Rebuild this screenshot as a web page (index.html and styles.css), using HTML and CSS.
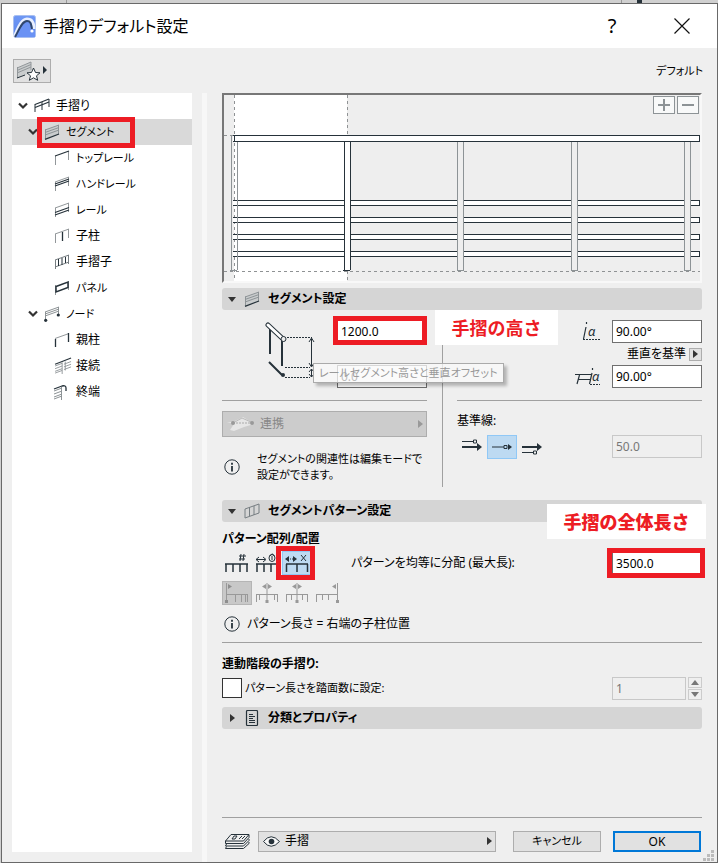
FILE: index.html
```html
<!DOCTYPE html>
<html lang="ja">
<head>
<meta charset="utf-8">
<meta name="viewport" content="width=device-width, initial-scale=1">
<title>手摺りデフォルト設定</title>
<link rel="stylesheet" href="styles.css">
</head>
<body>
<svg width="0" height="0" class="defs" aria-hidden="true">
  <symbol id="segment" viewBox="0 0 16 16"><path d="M1 6 15 1v9L1 15z" fill="#c9cccd"/><path d="M1 6 15 1M1 8.500 15 3.500M1 11 15 6M1.500 5.500v9.500M14.500 1v9" stroke="#8d9396" fill="none"/><path d="M1 15.300 15 10" stroke="#26323a" stroke-width="1.300"/></symbol>
  <symbol id="chevron" viewBox="0 0 10 8"><path d="M1 1.500 5 5.500 9 1.500" fill="none" stroke="#333" stroke-width="2.200"/></symbol>
  <symbol id="info" viewBox="0 0 16 16"><circle cx="8" cy="8" r="7.200" fill="none" stroke="#26323a"/><path d="M8 3.700v2M8 7v5.500" stroke="#26323a" stroke-width="1.800"/></symbol>
  <symbol id="down" viewBox="0 0 8 5"><path d="M0 0h8L4 5z" fill="#333"/></symbol>
  <symbol id="right" viewBox="0 0 5 8"><path d="M0 0v8l5-4z" fill="currentColor"/></symbol>
</svg>
<div class="backdrop" aria-hidden="true"></div>
<main class="dialog">
  <header class="titlebar">
    <svg class="logo" width="23" height="23" viewBox="0 0 23 23"><defs><linearGradient id="blue" x2="0" y2="1"><stop stop-color="#6f98f4"/><stop offset="1" stop-color="#5c86ee"/></linearGradient></defs><rect x=".5" y=".5" width="22" height="22" rx="2" fill="url(#blue)" stroke="#a8bff0"/><path d="M1 22C5 14 7 5 14 4c6 0 7 6 7 10" fill="none" stroke="#e8efff" stroke-width="3"/><path d="M3 22C7 15 9 7 14 7c3 0 4 3 5 7v2l3-1v7z" fill="#6a92f4"/><path d="M2 22C6 15 9 6 14 6c4 0 4 3 5 8" fill="none" stroke="#30476f" stroke-width="2"/><circle cx="19" cy="16" r="1.600" fill="#fff"/></svg>
    <h1>手摺りデフォルト設定</h1>
    <button class="window-button help" type="button" aria-label="ヘルプ">?</button>
    <button class="window-button" type="button" aria-label="閉じる"><svg width="16" height="16" viewBox="0 0 16 16"><path d="m.5.5 15 15m0-15-15 15" stroke="#111" stroke-width="1.200"/></svg></button>
  </header>
  <div class="toolbar">
    <button class="favorites" type="button" aria-label="お気に入り"><svg width="32" height="20" viewBox="0 0 32 20"><path d="M1 7 15 1v11L1 17z" fill="#c9cccd"/><path d="M1 7 15 1M1 9.500 15 3.500M1 12 15 6M1.500 6v11M15 1v8" stroke="#92979a" fill="none"/><path d="m1 17 8-3" stroke="#26323a"/><path d="m17.500 7 2 4.500 4.500.3-3.500 3 1.200 4.500-4.200-2.500-4.200 2.500 1.200-4.500-3.500-3 4.500-.3z" fill="#fff" stroke="#26323a"/><path d="M27 5v8l4-4z" fill="#26323a"/></svg></button>
    <span class="kana">デフォルト</span>
  </div>
  <div class="workspace">
    <nav class="tree" aria-label="設定">
      <ul>
        <li class="node top"><svg class="chevron"><use href="#chevron"/></svg><svg class="tree-icon" viewBox="0 0 16 16"><path d="M1 6.500 15 1M1 9.500 15 4" stroke="#26323a" stroke-width="1.300"/><path d="M1 6v8M8 4v8M15 1v8" stroke="#26323a"/></svg>手摺り</li>
        <li class="node middle selected kana"><svg class="chevron"><use href="#chevron"/></svg><svg class="tree-icon"><use href="#segment"/></svg>セグメント<span class="marker tree-marker"></span></li>
        <li class="node leaf kana"><svg class="tree-icon" viewBox="0 0 16 16"><path d="M1.500 6v9M14.500 1v9" stroke="#92979a"/><path d="M1 6 15 1" stroke="#26323a" stroke-width="1.300"/></svg>トップレール</li>
        <li class="node leaf kana"><svg class="tree-icon" viewBox="0 0 16 16"><path d="M1.500 6v9M14.500 1v9M1 6 15 1" stroke="#92979a"/><path d="m1 8 14-5M1 10l14-5" stroke="#26323a" stroke-width="1.200"/></svg>ハンドレール</li>
        <li class="node leaf kana"><svg class="tree-icon" viewBox="0 0 16 16"><path d="M1.500 6v9M14.500 1v9M1 6 15 1" stroke="#92979a"/><path d="m1 10.500 14-5M1 13l14-5" stroke="#26323a" stroke-width="1.200"/></svg>レール</li>
        <li class="node leaf"><svg class="tree-icon" viewBox="0 0 16 16"><path d="M1.500 6v9M14.500 1v9M1 6 15 1" stroke="#92979a"/><path d="M8.500 4v9" stroke="#26323a" stroke-width="1.300"/></svg>子柱</li>
        <li class="node leaf"><svg class="tree-icon" viewBox="0 0 16 16"><path d="M1.500 6v9M14.500 1v9M1 6 15 1M1 13 15 8" stroke="#777e82"/><path d="M4.500 5v7M8 4v7M11.500 3v6" stroke="#26323a"/></svg>手摺子</li>
        <li class="node leaf kana"><svg class="tree-icon" viewBox="0 0 16 16"><path d="M1.500 5v10M14.500 1v9" stroke="#92979a"/><path d="M2 6.500 14 2v5.500L2 12z" fill="none" stroke="#26323a" stroke-width="1.500"/></svg>パネル</li>
        <li class="node middle kana"><svg class="chevron"><use href="#chevron"/></svg><svg class="tree-icon" viewBox="0 0 16 16"><path d="M1.500 6v8M14.500 1v8M1 6 15 1M1 8 15 3M1 10 15 5" stroke="#8d9396"/><circle cx="1.700" cy="14.300" r="1.600" fill="#26323a"/><circle cx="14.300" cy="9" r="1.600" fill="#26323a"/></svg>ノード</li>
        <li class="node leaf"><svg class="tree-icon" viewBox="0 0 16 16"><path d="M1 6.500 15 1.500" stroke="#92979a"/><path d="M1.500 7v8M14.500 1v9" stroke="#26323a" stroke-width="1.300"/></svg>親柱</li>
        <li class="node leaf"><svg class="tree-icon wide" viewBox="0 0 19 18"><path d="M0 9 8 6M0 12l8-3M0 15l8-3M0 17l8-3M10 7l8-3M10 10l8-3M10 13l8-3M8 5v13M11.500 4v10" stroke="#8d9396"/><path d="M0 7 18 0" stroke="#26323a" stroke-width="1.300"/></svg>接続</li>
        <li class="node leaf"><svg class="tree-icon" viewBox="0 0 16 16"><path d="m0 7 8-3M0 10l8-3M0 13l8-3M0 15l8-3M7.500 3v13" stroke="#8d9396"/><path d="m0 5 8-3q4-1 4 2v3" fill="none" stroke="#26323a" stroke-width="1.300"/></svg>終端</li>
      </ul>
    </nav>
    <div class="splitter"></div>
    <form class="settings">
      <div class="preview">
        <svg class="drawing" viewBox="224 95 476 186" preserveAspectRatio="xMinYMin slice" shape-rendering="crispEdges">
          <path d="M234 95h113v186H234z" fill="#fff"/>
          <path d="M234.500 95v186M347.500 95v40M347.500 271v10M224 135.500h10M224 271.500h476" stroke="#8f9294" stroke-dasharray="3 3"/>
          <g fill="#fff" stroke="#26323a"><path d="M233 135.500h466.500v6H233"/><path d="M233 200.500h466.500v5H233"/><path d="M233 217.500h466.500v5H233"/><path d="M233 234.500h466.500v5H233"/><path d="M233 251.500h466.500v5H233"/><path d="M344.500 142v128M350.500 142v128M343 270.500h7"/></g>
          <path d="M345 142h5v128h-5z" fill="#fff"/>
          <g fill="#eee" stroke="#8d9396"><path d="M457.500 142v128.500h6V142"/><path d="M571.500 142v128.500h6V142"/><path d="M684.500 142v128.500h6V142"/></g>
          <path d="M231.500 136v134M237.500 142v128M230 270.500h7" stroke="#8d9396"/><path d="M234.500 135v7" stroke="#26323a"/>
        </svg>
        <div class="zoom-buttons"><button type="button" aria-label="拡大"><svg width="12" height="12"><path d="M0 6h12M6 0v12" stroke="#8d9396" stroke-width="2"/></svg></button><button type="button" aria-label="縮小"><svg width="12" height="12"><path d="M0 6h12" stroke="#8d9396" stroke-width="2"/></svg></button></div>
      </div>
      <h2 class="section-title"><svg class="down"><use href="#down"/></svg><svg class="section-icon"><use href="#segment"/></svg>セグメント設定</h2>
      <div class="segment-section">
        <div class="column">
          <div class="dimensions">
            <svg class="rail-figure" width="50" height="60" viewBox="0 0 50 60"><path d="M5 6v28M17 20v26M4 42l13 13" stroke="#26323a" stroke-width="2"/><path d="m3 5 15 14" stroke="#26323a" stroke-width="5" stroke-linecap="round"/><path d="m3 5 15 14" stroke="#fff" stroke-width="3" stroke-linecap="round"/><circle cx="18.500" cy="19" r="2.500" fill="#eee" stroke="#26323a"/><circle cx="18" cy="55" r="2" fill="#26323a"/><path d="M22 17.500h25M20 47.500h25M20 57.500h25" stroke="#26323a" stroke-dasharray="2 1"/><path d="M46.500 19v27M46.500 49v8M44 22l2.500-4 2.500 4M44 43l2.500 4 2.500-4M44 52l2.500-3 2.500 3M44 54l2.500 3 2.500-3" fill="none" stroke="#26323a"/></svg>
            <div class="dimension-fields">
              <div class="field-anchor"><input aria-label="レールセグメント高さ" value="1200.0"><span class="marker field-marker"></span><strong class="callout height-callout">手摺の高さ</strong></div>
              <div class="field-anchor"><input aria-label="垂直オフセット" value="0.0"><span class="tooltip kana" role="tooltip">レールセグメント高さと垂直オフセット</span></div>
            </div>
          </div>
          <div class="below-rule">
            <button class="link-button" type="button" disabled><svg width="28" height="16" viewBox="0 0 28 16"><path d="M0 6h6l10-5 11 7-10 3-10 4-4-1 4-6z" fill="#e6e6e6"/><path d="M6 7 15 2l11 5" fill="none" stroke="#bbb"/><path d="M6 7h20" stroke="#aaa" stroke-dasharray="2 1"/><circle cx="6" cy="7" r="2" fill="#999"/><circle cx="25" cy="7" r="2" fill="#999"/></svg><span>連携</span><svg class="right"><use href="#right"/></svg></button>
            <p class="information kana"><svg class="info"><use href="#info"/></svg><span>セグメントの関連性は編集モードで<br>設定ができます。</span></p>
          </div>
        </div>
        <div class="column">
          <div class="angles">
            <label class="angle"><svg width="24" height="20" viewBox="0 0 24 20"><path d="M4 5 1.500 17M4.500 0v2" stroke="#26323a" stroke-width="1.200"/><path d="M1 17.500h18" stroke="#26323a" stroke-dasharray="2 1"/><text x="6" y="14" class="alpha">α</text></svg><input aria-label="上部角度" value="90.00°"></label>
            <div class="reference"><span>垂直を基準</span><button type="button" aria-label="角度の基準"><svg class="right"><use href="#right"/></svg></button></div>
            <label class="angle"><svg width="31" height="20" viewBox="0 0 31 20"><path d="M0 7.500h17M3 12.500h13M4.500 8 2 17M17 6l-2.500 11M17.500 1v2" stroke="#26323a" stroke-width="1.200"/><path d="M15 17.500h10" stroke="#26323a" stroke-dasharray="2 1"/><text x="17" y="14" class="alpha">α</text></svg><input aria-label="下部角度" value="90.00°"></label>
          </div>
          <div class="below-rule">
            <span class="baseline-label">基準線:</span>
            <div class="baseline">
              <button class="tool" type="button" aria-label="左側の基準線"><svg width="20" height="16" viewBox="0 0 20 16"><path d="M0 2.500h11M11.500 1h3v3h-3z" stroke="#26323a" fill="none"/><path d="M0 8h16" stroke="#26323a" stroke-width="2"/><path d="M15 4v8l5-4z" fill="#26323a"/></svg></button>
              <button class="tool active" type="button" aria-label="中央の基準線"><svg width="20" height="16" viewBox="0 0 20 16"><path d="M0 8h12M12 6.500h3v3h-3z" stroke="#26323a" fill="none"/><path d="M16 5v6l4-3z" fill="#26323a"/></svg></button>
              <button class="tool" type="button" aria-label="右側の基準線"><svg width="20" height="16" viewBox="0 0 20 16"><path d="M0 13.500h11M11.500 12h3v3h-3z" stroke="#26323a" fill="none"/><path d="M0 8h16" stroke="#26323a" stroke-width="2"/><path d="M15 4v8l5-4z" fill="#26323a"/></svg></button>
              <input aria-label="オフセット" value="50.0" disabled>
            </div>
          </div>
        </div>
      </div>
      <h2 class="section-title"><svg class="down"><use href="#down"/></svg><svg class="section-icon" viewBox="0 0 16 16"><path d="M1 6 15 1v9L1 15zM5.500 4v9M10 3v9" fill="none" stroke="#777e82"/></svg>セグメントパターン設定<strong class="callout length-callout">手摺の全体長さ</strong></h2>
      <div class="pattern-section">
        <h3>パターン配列/配置</h3>
        <div class="pattern-row">
          <div class="tools">
            <button class="tool" type="button" aria-label="個数"><svg width="24" height="20" viewBox="0 0 24 20"><path d="M0 11h23M1 11v8M8 11v8M15 11v8M22 11v8" stroke="#26323a" stroke-width="1.500"/><path d="m16 1-1 7m4-7-1 7m-4-5h7m-7 3h6" stroke="#26323a"/></svg></button>
            <button class="tool" type="button" aria-label="固定長"><svg width="24" height="20" viewBox="0 0 24 20"><path d="M1 11h22M2 11v8M9 11v8M16 11v8" stroke="#26323a" stroke-width="1.500"/><path d="M1 6.500h9M4 4 1 6.500 4 9M8 4l3 2.500L8 9M15 3q2.500-4 4 0" stroke="#26323a" fill="none"/><ellipse cx="17" cy="5" rx="3" ry="3.500" fill="none" stroke="#26323a"/><path d="M17 3v4" stroke="#26323a"/></svg></button>
            <button class="tool active" type="button" aria-label="均等分配"><svg width="24" height="20" viewBox="0 0 24 20"><path d="M1 11h22M1.500 11v8M12 11v8M22.500 11v8" stroke="#26323a" stroke-width="1.500"/><path d="M0 6l4-3v6zM12 6 8 3v6z" fill="#26323a"/><path d="M5 6h1M7 6h1M16 2l5 6m0-6-5 6" stroke="#26323a"/></svg></button>
            <span class="marker tool-marker"></span>
          </div>
          <label for="length">パターンを均等に分配 (最大長):</label>
          <div class="field-anchor end"><input id="length" class="focused" value="3500.0"><span class="marker length-marker"></span></div>
        </div>
        <div class="tools alignments">
          <button class="tool active" type="button" disabled aria-label="始点"><svg width="24" height="20" viewBox="0 0 24 20"><path d="M1.500 0v18M1 11.500h22M10.500 12v7M16.500 12v7M20.500 12v7M22.500 11v8" stroke="#999"/><path d="M3 1v5l4-2.500zM0 17h3v3H0z" fill="#8e8e8e"/></svg></button>
          <button class="tool" type="button" disabled aria-label="中央間隔"><svg width="24" height="20" viewBox="0 0 24 20"><path d="M12 0v17M1 11.500h22M1.500 11v8M4.500 11v6M19.500 11v6M22.500 11v8" stroke="#999"/><path d="M11 1v5L7 3.500zM13 1v5l4-2.500zM10.500 17h3v3h-3z" fill="#999"/></svg></button>
          <button class="tool" type="button" disabled aria-label="中央支柱"><svg width="24" height="20" viewBox="0 0 24 20"><path d="M12 0v17M1 11.500h22M1.500 11v8M6.500 11v6M17.500 11v6M22.500 11v8" stroke="#999"/><path d="M11 1v5L7 3.500zM13 1v5l4-2.500zM10.500 17h3v3h-3z" fill="#999"/></svg></button>
          <button class="tool" type="button" disabled aria-label="終点"><svg width="24" height="20" viewBox="0 0 24 20"><path d="M22.500 0v18M1 11.500h22M1.500 11v8M7.500 11v6M13.500 11v6" stroke="#999"/><path d="M21 1v5l-4-2.500zM21 17h3v3h-3z" fill="#999"/></svg></button>
        </div>
        <p class="information pattern-info"><svg class="info"><use href="#info"/></svg><span>パターン長さ = 右端の子柱位置</span></p>
      </div>
      <div class="stair-section">
        <h3>連動階段の手摺り:</h3>
        <div class="stair-row"><input type="checkbox" id="steps"><label class="kana" for="steps">パターン長さを踏面数に設定:</label><div class="stepper"><input aria-label="踏面数" value="1" disabled><div class="spin"><button type="button" disabled aria-label="増加"><svg width="8" height="5"><path d="m0 5 4-5 4 5z" fill="#777"/></svg></button><button type="button" disabled aria-label="減少"><svg width="8" height="5"><path d="m0 0 4 5 4-5z" fill="#777"/></svg></button></div></div></div>
      </div>
      <h2 class="section-title"><svg class="right"><use href="#right"/></svg><svg class="section-icon" viewBox="0 0 16 16"><rect x="2.500" y=".5" width="11" height="15" rx="1" fill="none" stroke="#26323a" stroke-width="1.200"/><path d="M5 4.500h4M5 6.500h6M5 8.500h4M5 10.500h6M5 12.500h6" stroke="#26323a"/></svg>分類とプロパティ</h2>
      <footer class="footer">
        <svg class="layers" width="26" height="16" viewBox="0 0 26 16"><path d="M7 1.500h18L19.500 8h-18zM1.500 8v2.500h18L25 4.500V2M2.500 11l-1 2h18L25 7.500V6M2.500 13.500l-1 2h18l5.500-5V9" fill="none" stroke="#26323a"/><path d="m8 6 2-3h3l-2 3zM15 6l3-3M18 6l3-3" fill="none" stroke="#26323a"/></svg>
        <button class="layer-picker" type="button"><svg width="17" height="11" viewBox="0 0 17 11"><path d="M.5 5.500Q8 -4 16.500 5.500 8 15 .5 5.500z" fill="#f8f8f8" stroke="#26323a"/><circle cx="8.500" cy="5.500" r="2.800" fill="#26323a"/></svg><span>手摺</span><svg class="right"><use href="#right"/></svg></button>
        <button class="action kana" type="button">キャンセル</button>
        <button class="action primary" type="button">OK</button>
      </footer>
    </form>
  </div>
  <svg class="grip" width="11" height="11" viewBox="0 0 11 11" aria-hidden="true"><path d="M8 0h3v3H8zM4 4h3v3H4zM8 4h3v3H8zM0 8h3v3H0zM4 8h3v3H4zM8 8h3v3H8z" fill="#bbb"/></svg>
</main>
</body>
</html>
```

FILE: styles.css
```css
* { box-sizing: border-box; }
body {
  margin: 0;
  min-height: 100vh;
  display: flex;
  flex-direction: column;
  background: #d0d0d0;
  color: #000;
  font: 12px/16px "Noto Sans", "Noto Sans CJK JP", sans-serif;
  font-feature-settings: "palt";
}
button, input { font: inherit; color: inherit; margin: 0; font-feature-settings: inherit; }
button { padding: 0; border: 1px solid #adadad; background: #e1e1e1; }
h1, h2, h3, p, ul { margin: 0; padding: 0; }
svg { display: block; flex: none; }
.kana { font-size: 11px; }
.defs { position: absolute; }
.backdrop { height: 3px; background: linear-gradient(90deg, transparent 66px, #999 66px 67px, transparent 67px 621px, #999 621px 622px, transparent 622px 637px, #26323a 637px 642px, transparent 642px); }
.dialog {
  position: relative;
  flex: 1;
  display: flex;
  flex-direction: column;
  margin: 0 0 0 1px;
  border: 1px solid #696969;
  background: #efefef;
}
.titlebar { display: flex; align-items: center; height: 44px; padding-left: 11px; background: #fff; }
.titlebar h1 { flex: 1; margin-left: 7px; font-size: 16px; line-height: 24px; font-weight: 400; }
.window-button { width: 70px; height: 40px; display: grid; place-items: center; border: 0; background: transparent; }
.help { font-size: 20px; }
.toolbar { display: flex; justify-content: space-between; align-items: center; height: 45px; padding: 0 14px 0 11px; }
.favorites { width: 38px; height: 24px; display: grid; place-items: center; }
.workspace { flex: 1; display: flex; }
.tree { flex: 0 0 180px; margin: 0 10px 10px; background: #fff; }
.tree ul { list-style: none; }
.node { position: relative; display: flex; align-items: center; height: 26px; }
.top { padding-left: 6px; }
.middle { padding-left: 16px; }
.leaf { padding-left: 42px; }
.selected { background: #d9d9d9; }
.chevron { width: 10px; height: 8px; margin-right: 6px; }
.tree-icon { width: 16px; height: 16px; margin-right: 6px; overflow: visible; }
.wide { width: 19px; margin-right: 3px; }
.marker { position: absolute; border: 5px solid #ed1c24; pointer-events: none; }
.tree-marker { left: 25px; top: -2px; width: 98px; height: 31px; }
.splitter { flex: 0 0 5px; background: #f7f7f7; }
.settings { flex: 1; display: flex; flex-direction: column; margin: 0 15px; min-width: 0; }
.preview { position: relative; height: 190px; border: 2px solid; border-color: #777 #f8f8f8 #f8f8f8 #777; background: #eee; }
.drawing { width: 100%; height: 186px; }
.zoom-buttons { position: absolute; top: 1px; right: 1px; display: flex; gap: 2px; }
.zoom-buttons button { width: 22px; height: 18px; display: grid; place-items: center; background: #f8f9f9; border-color: #8d9396; }
.section-title { position: relative; display: flex; align-items: center; height: 22px; padding-left: 6px; border-radius: 3px; background: #d5d5d5; font-size: 12px; line-height: 16px; }
.preview + .section-title { margin-top: 5px; }
.down { width: 8px; height: 5px; }
.right { width: 5px; height: 8px; color: #333; }
.section-title > .right { margin: 0 1px 0 2px; }
.section-icon { width: 16px; height: 16px; margin: 0 8px; }
.segment-section { display: grid; grid-template-columns: 205px 1fr; gap: 30px; height: 190px; position: relative; }
.segment-section::before { content: ""; position: absolute; left: 220px; top: 8px; bottom: 13px; border-left: 1px solid #a0a0a0; }
.dimensions, .angles { height: 91px; padding-top: 10px; border-bottom: 1px solid #a0a0a0; }
.dimensions { display: flex; justify-content: space-between; padding-left: 43px; }
.dimension-fields { display: flex; flex-direction: column; gap: 22px; }
.field-anchor { position: relative; }
input:not([type="checkbox"]) { display: block; width: 90px; height: 23px; padding: 0 3px; border: 1px solid #6f6f6f; background: #fff; border-radius: 0; }
input:disabled:not([type="checkbox"]) { border-color: #c8c8c8; background: #efefef; color: #777; }
.field-marker { left: -4px; top: -4px; width: 94px; height: 29px; }
.callout { position: absolute; display: grid; place-items: center; height: 35px; background: #fff; color: #ed1c24; font-size: 18px; line-height: 24px; white-space: nowrap; font-feature-settings: normal; }
.height-callout { left: 98px; top: -10px; width: 123px; }
.length-callout { right: -4px; top: 4px; width: 159px; }
.tooltip { position: absolute; z-index: 1; left: -24px; top: -2px; height: 20px; padding: 1px 5px; border: 1px solid #aaa; background: rgba(250, 250, 250, .75); box-shadow: 3px 3px 3px rgba(0, 0, 0, .25); color: #999; white-space: nowrap; }
.below-rule { padding-top: 10px; }
.link-button { display: flex; align-items: center; width: 100%; height: 26px; padding: 0 3px 0 4px; gap: 5px; background: #ccc; color: #888; }
.link-button span, .layer-picker span { flex: 1; text-align: left; }
.link-button .right { color: #999; }
.information { display: flex; align-items: center; gap: 17px; padding: 14px 2px 0; line-height: 16px; white-space: nowrap; }
.info { width: 16px; height: 16px; }
.angle { display: flex; align-items: center; justify-content: flex-end; gap: 6px; }
.alpha { font: italic 13px "Noto Sans", sans-serif; fill: #26323a; }
.reference { display: flex; justify-content: flex-end; align-items: center; gap: 3px; height: 22px; }
.reference button { width: 13px; height: 13px; display: grid; place-items: center; }
.baseline-label { display: block; height: 24px; line-height: 20px; }
.baseline { display: flex; }
.baseline input { margin-left: auto; }
.tool { width: 30px; height: 24px; display: grid; place-items: center; background: transparent; border-color: transparent; }
.tool.active { background: #bddaf2; border-color: #90c8f6; }
.tool.active:disabled { background: #c8c8c8; border-color: #b5b5b5; }
.pattern-section { height: 121px; padding-top: 8px; border-bottom: 1px solid #a0a0a0; }
h3 { font-size: 12px; line-height: 18px; }
.pattern-row { display: flex; align-items: center; margin-top: 3px; }
.tools { position: relative; display: flex; }
.tool-marker { left: 54px; top: -5px; width: 39px; height: 34px; }
.pattern-row > label { margin-left: 39px; }
.end { margin-left: auto; }
.focused { outline: 1px solid #0078d7; }
.length-marker { left: -5px; top: -4px; width: 98px; height: 30px; }
.alignments { margin-top: 6px; }
.pattern-info { gap: 7px; padding-top: 11px; }
.stair-section { padding-top: 12px; height: 64px; }
.stair-row { display: flex; align-items: center; height: 26px; margin-top: 2px; gap: 3px; }
.stair-row > input { appearance: none; width: 20px; height: 20px; margin: 0; border: 1px solid #333; background: #fff; }
.stepper { display: flex; gap: 2px; margin-left: auto; }
.stepper > input:not([type="checkbox"]) { width: 74px; }
.spin { display: flex; flex-direction: column; gap: 1px; }
.spin button { width: 14px; height: 11px; display: grid; place-items: center; border-color: #ccc; background: #efefef; }
.footer { display: flex; align-items: center; margin-top: auto; height: 45px; padding: 2px 1px 0 2px; border-top: 1px solid #a0a0a0; }
.footer .layer-picker { flex: 1; display: flex; align-items: center; gap: 5px; height: 21px; margin: 0 17px 0 8px; padding: 0 3px 0 4px; }
.action { width: 88px; height: 21px; line-height: 18px; }
.primary { margin-left: 12px; border: 2px solid #0078d7; }
.grip { position: absolute; right: 3px; bottom: 1px; }
```
